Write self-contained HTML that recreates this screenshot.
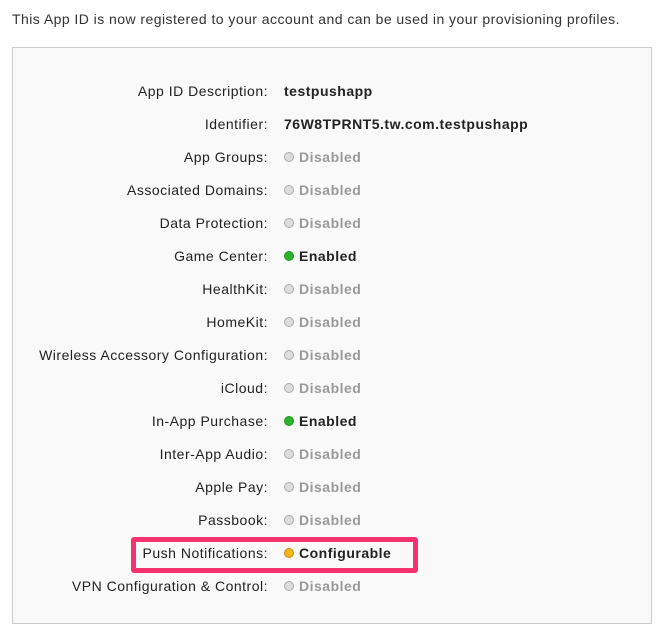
<!DOCTYPE html>
<html><head><style>
html,body{margin:0;padding:0;background:#fff;width:669px;height:631px;overflow:hidden;font-family:"Liberation Sans",sans-serif;}
.top{position:absolute;left:12px;top:11px;font-size:14px;color:#333;white-space:nowrap;letter-spacing:0.45px}
.box{position:absolute;left:12px;top:47px;width:638px;height:575px;background:#f9f9f9;border:1px solid #ccc;}
.row{position:absolute;left:0;height:20px;line-height:20px;font-size:14px;white-space:nowrap;letter-spacing:0.5px}
.lab{position:absolute;right:383px;color:#222;text-align:right;}
.val{position:absolute;left:271px;font-weight:bold;color:#222;}
.dis{color:#999}
.dot{display:inline-block;width:9px;height:9px;border-radius:50%;margin-right:5px;vertical-align:0px;}
.g{background:#2bb32b;border:1px solid #1f9a1f;width:8px;height:8px}
.d{background:#ddd;border:1px solid #aaa;width:8px;height:8px}
.y{background:#f3b61c;border:1px solid #c98d05;width:8px;height:8px}
.hl{position:absolute;left:131px;top:537px;width:277px;height:26px;border:5px solid #f5326e;border-radius:3px;}
</style></head><body>
<div class="top">This App ID is now registered to your account and can be used in your provisioning profiles.</div>
<div class="box">
<div class="row" style="top:33px;width:638px"><span class="lab">App ID Description:</span><span class="val">testpushapp</span></div>
<div class="row" style="top:66px;width:638px"><span class="lab">Identifier:</span><span class="val">76W8TPRNT5.tw.com.testpushapp</span></div>
<div class="row" style="top:99px;width:638px"><span class="lab">App Groups:</span><span class="val dis"><span class="dot d"></span>Disabled</span></div>
<div class="row" style="top:132px;width:638px"><span class="lab">Associated Domains:</span><span class="val dis"><span class="dot d"></span>Disabled</span></div>
<div class="row" style="top:165px;width:638px"><span class="lab">Data Protection:</span><span class="val dis"><span class="dot d"></span>Disabled</span></div>
<div class="row" style="top:198px;width:638px"><span class="lab">Game Center:</span><span class="val"><span class="dot g"></span>Enabled</span></div>
<div class="row" style="top:231px;width:638px"><span class="lab">HealthKit:</span><span class="val dis"><span class="dot d"></span>Disabled</span></div>
<div class="row" style="top:264px;width:638px"><span class="lab">HomeKit:</span><span class="val dis"><span class="dot d"></span>Disabled</span></div>
<div class="row" style="top:297px;width:638px"><span class="lab">Wireless Accessory Configuration:</span><span class="val dis"><span class="dot d"></span>Disabled</span></div>
<div class="row" style="top:330px;width:638px"><span class="lab">iCloud:</span><span class="val dis"><span class="dot d"></span>Disabled</span></div>
<div class="row" style="top:363px;width:638px"><span class="lab">In-App Purchase:</span><span class="val"><span class="dot g"></span>Enabled</span></div>
<div class="row" style="top:396px;width:638px"><span class="lab">Inter-App Audio:</span><span class="val dis"><span class="dot d"></span>Disabled</span></div>
<div class="row" style="top:429px;width:638px"><span class="lab">Apple Pay:</span><span class="val dis"><span class="dot d"></span>Disabled</span></div>
<div class="row" style="top:462px;width:638px"><span class="lab">Passbook:</span><span class="val dis"><span class="dot d"></span>Disabled</span></div>
<div class="row" style="top:495px;width:638px"><span class="lab">Push Notifications:</span><span class="val"><span class="dot y"></span>Configurable</span></div>
<div class="row" style="top:528px;width:638px"><span class="lab">VPN Configuration &amp; Control:</span><span class="val dis"><span class="dot d"></span>Disabled</span></div>
</div>
<div class="hl"></div>
</body></html>
